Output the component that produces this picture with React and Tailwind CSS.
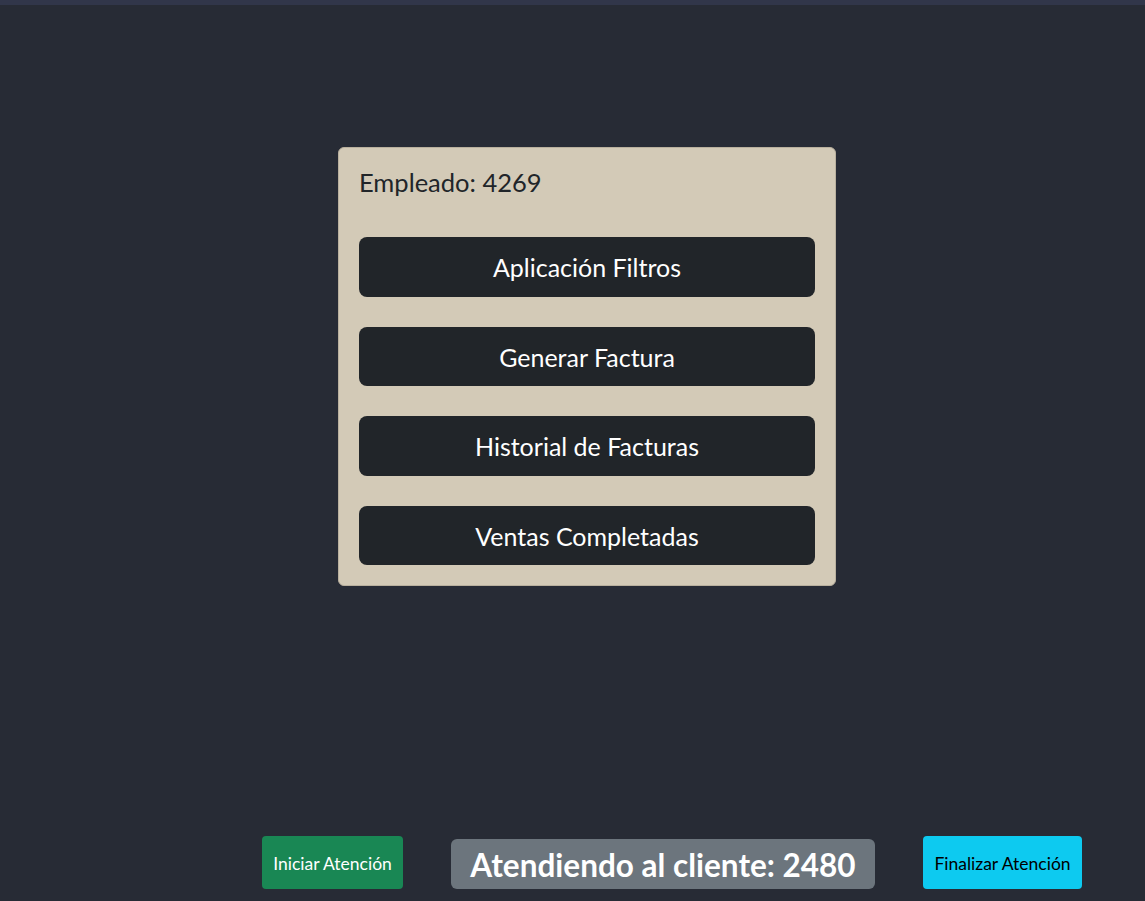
import React from 'react';

const menu = ['Aplicación Filtros', 'Generar Factura', 'Historial de Facturas', 'Ventas Completadas'];

export default function App() {
  return (
    <div className="min-h-[901px] bg-[#272b35] flex flex-col font-['Lato','Noto_Sans',sans-serif]">
      <div className="h-[5px] bg-[#31364a]" />

      {/* panel */}
      <div className="ml-[338px] mt-[142px] w-[498px] rounded-md border border-[#b9b09e] bg-[#d3cab7] px-5 pt-[19px] pb-5">
        <h4 className="text-[25.5px] leading-[30px] text-[#212529]">Empleado: 4269</h4>
        <div className="mt-[40px] flex flex-col gap-[30px]">
          {menu.map((m) => (
            <button
              key={m}
              className="h-[59.5px] w-full rounded-lg bg-[#212529] pt-[2px] text-[25px] text-white"
            >
              {m}
            </button>
          ))}
        </div>
      </div>

      {/* bottom actions */}
      <div className="mt-auto mb-3 ml-[262px] flex items-end gap-12">
        <button className="h-[53px] w-[141px] rounded bg-[#198754] pt-[3px] text-[17.5px] text-white">
          Iniciar Atención
        </button>
        <div className="flex h-[50px] w-[424px] items-center justify-center rounded-md bg-[#6c757d] pt-[3px] text-[31.5px] font-bold text-white">
          Atendiendo al cliente: 2480
        </div>
        <button className="h-[53px] w-[159px] rounded bg-[#0dcaf0] pt-[3px] text-[17.5px] text-black">
          Finalizar Atención
        </button>
      </div>
    </div>
  );
}
